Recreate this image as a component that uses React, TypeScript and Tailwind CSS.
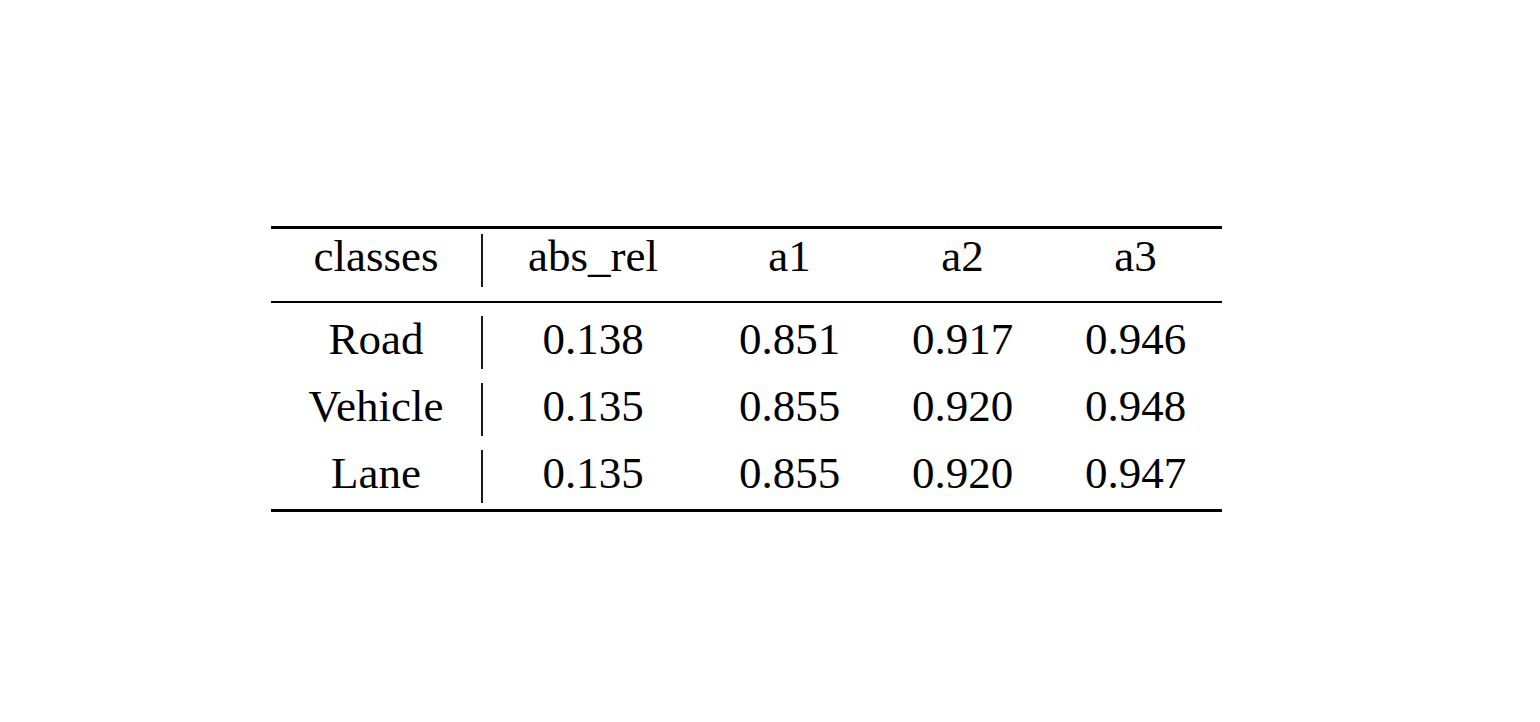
const header = ['classes', 'abs_rel', 'a1', 'a2', 'a3']

const rows = [
  ['Road', '0.138', '0.851', '0.917', '0.946'],
  ['Vehicle', '0.135', '0.855', '0.920', '0.948'],
  ['Lane', '0.135', '0.855', '0.920', '0.947'],
]

const Row = ({ cells, head }: { cells: string[]; head?: boolean }) => {
  const pad = head ? 'pt-[5px]' : 'pt-[14px]'
  return (
    <div className={head ? 'flex h-[72px]' : 'flex h-[67px]'}>
      <div className={`w-[210px] text-center leading-[45px] ${pad}`}>{cells[0]}</div>
      <div
        className={
          head
            ? 'w-[2px] bg-black mt-[5px] h-[53px] scale-x-90'
            : 'w-[2px] bg-black mt-[13px] h-[53px] scale-x-90'
        }
      ></div>
      <div className={`w-[220px] text-center leading-[45px] ${pad}`}>{cells[1]}</div>
      <div className={`w-[173px] text-center leading-[45px] ${pad}`}>{cells[2]}</div>
      <div className={`w-[173px] text-center leading-[45px] ${pad}`}>{cells[3]}</div>
      <div className={`w-[173px] text-center leading-[45px] ${pad}`}>{cells[4]}</div>
    </div>
  )
}

const App = () => {
  return (
    <div className="w-[1540px] h-[722px] bg-white pt-[226px] pl-[271px] text-black">
      <div className="w-[951px] text-[45px] font-['Liberation_Serif',serif]">
        <div className="h-[3px] bg-black"></div>
        <Row cells={header} head />
        <div className="h-[1.5px] bg-black"></div>
        {rows.map((r, i) => (
          <Row key={i} cells={r} />
        ))}
        <div className="h-[5px]"></div>
        <div className="h-[3px] bg-black"></div>
      </div>
    </div>
  )
}

export default App
